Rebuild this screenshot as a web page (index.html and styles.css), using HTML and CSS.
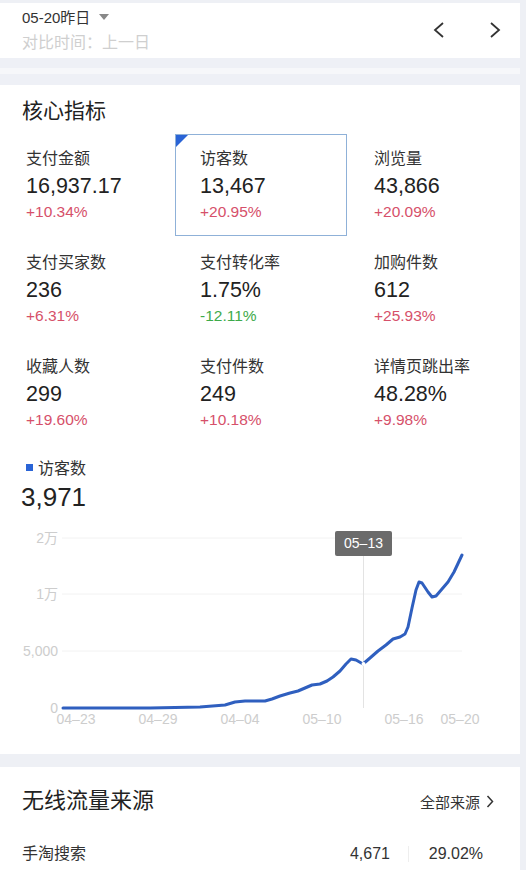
FILE: index.html
```html
<!DOCTYPE html>
<html>
  <head>
    <title>核心指标</title>
    <link rel="stylesheet" href="styles.css">
  </head>
  <body>
    <div class="page">
      <div class="header">
        <div class="date">
          <div class="date-main">05-20昨日 <span class="caret"></span></div>
          <div class="date-compare">对比时间：上一日</div>
        </div>
        <div class="nav">
          <svg width="12" height="16" viewBox="0 0 12 16"><polyline points="10,1 2,8 10,15" fill="none" stroke="#333" stroke-width="1.8"/></svg>
          <svg width="12" height="16" viewBox="0 0 12 16"><polyline points="2,1 10,8 2,15" fill="none" stroke="#333" stroke-width="1.8"/></svg>
        </div>
      </div>

      <div class="spacer"></div>

      <div class="panel core">
        <h2 class="panel-title">核心指标</h2>
        <div class="metrics">
          <div class="metric">
            <div class="metric-label">支付金额</div>
            <div class="metric-value">16,937.17</div>
            <div class="metric-change up">+10.34%</div>
          </div>
          <div class="metric active">
            <div class="metric-label">访客数</div>
            <div class="metric-value">13,467</div>
            <div class="metric-change up">+20.95%</div>
          </div>
          <div class="metric">
            <div class="metric-label">浏览量</div>
            <div class="metric-value">43,866</div>
            <div class="metric-change up">+20.09%</div>
          </div>
          <div class="metric">
            <div class="metric-label">支付买家数</div>
            <div class="metric-value">236</div>
            <div class="metric-change up">+6.31%</div>
          </div>
          <div class="metric">
            <div class="metric-label">支付转化率</div>
            <div class="metric-value">1.75%</div>
            <div class="metric-change down">-12.11%</div>
          </div>
          <div class="metric">
            <div class="metric-label">加购件数</div>
            <div class="metric-value">612</div>
            <div class="metric-change up">+25.93%</div>
          </div>
          <div class="metric">
            <div class="metric-label">收藏人数</div>
            <div class="metric-value">299</div>
            <div class="metric-change up">+19.60%</div>
          </div>
          <div class="metric">
            <div class="metric-label">支付件数</div>
            <div class="metric-value">249</div>
            <div class="metric-change up">+10.18%</div>
          </div>
          <div class="metric">
            <div class="metric-label">详情页跳出率</div>
            <div class="metric-value">48.28%</div>
            <div class="metric-change up">+9.98%</div>
          </div>
        </div>

        <div class="legend"><span class="legend-dot"></span>访客数</div>
        <div class="legend-value">3,971</div>

        <svg class="chart" width="520" height="220" viewBox="0 520 520 220">
          <g stroke="#f2f2f2" stroke-width="1">
            <line x1="62" y1="536" x2="462" y2="536"/>
            <line x1="62" y1="592" x2="462" y2="592"/>
            <line x1="62" y1="649" x2="462" y2="649"/>
          </g>
          <g class="axis-y" text-anchor="end">
            <text x="58" y="541">2万</text>
            <text x="58" y="597">1万</text>
            <text x="58" y="654">5,000</text>
            <text x="58" y="711">0</text>
          </g>
          <g class="axis-x" text-anchor="middle">
            <text x="76" y="722">04–23</text>
            <text x="158" y="722">04–29</text>
            <text x="240" y="722">04–04</text>
            <text x="322" y="722">05–10</text>
            <text x="404" y="722">05–16</text>
            <text x="460" y="722">05–20</text>
          </g>
          <line x1="363.5" y1="553" x2="363.5" y2="706" stroke="#e3e3e3" stroke-width="1"/>
          <polyline fill="none" stroke="#2f5fbf" stroke-width="3" stroke-linejoin="round" stroke-linecap="round"
            points="63,706 150,706 200,705 225,703 235,700 245,699 265,699 272,697 280,694 290,691 298,689 305,686 312,683 320,682 327,679 333,675 340,669 346,662 351,657 356,658 363,662 370,656 378,649 386,643 393,637 400,635 405,632 408,625 412,606 416,588 419,580 422,581 428,590 432,595 436,594 442,587 448,580 454,570 462,553"/>
          <circle cx="363.5" cy="662" r="2" fill="#fff"/>
          <rect x="335" y="529" width="57" height="25" rx="2" fill="#6b6b6b"/>
          <text class="tip" x="363.5" y="546" text-anchor="middle">05–13</text>
        </svg>
      </div>

      <div class="panel sources">
        <div class="sources-head">
          <h2 class="panel-title">无线流量来源</h2>
          <div class="more">全部来源
            <svg width="8" height="13" viewBox="0 0 8 13"><polyline points="1.5,1 6.5,6.5 1.5,12" fill="none" stroke="#333" stroke-width="1.5"/></svg>
          </div>
        </div>
        <div class="source-row">
          <span class="source-name">手淘搜索</span>
          <span class="source-num">4,671</span>
          <span class="source-sep"></span>
          <span class="source-pct">29.02%</span>
        </div>
      </div>
    </div>
  </body>
</html>
```

FILE: styles.css
```css
body {
  margin: 0;
  background-color: #eef0f5;
  font-family: "Liberation Sans", "Noto Sans CJK SC", sans-serif;
  color: #222;
}

.page {
  width: 520px;
  padding-top: 3px;
}

.header {
  height: 55px;
  box-sizing: border-box;
  background-color: #fff;
  padding: 5px 19px 0 22px;
  display: flex;
  justify-content: space-between;
}

.date-main {
  font-size: 15px;
  line-height: 20px;
  color: #333;
}

.caret {
  display: inline-block;
  margin-left: 4px;
  vertical-align: 3px;
  border-left: 5px solid transparent;
  border-right: 5px solid transparent;
  border-top: 6px solid #888;
}

.date-compare {
  margin-top: 5px;
  font-size: 16px;
  line-height: 20px;
  color: #cfcfcf;
}

.nav {
  display: flex;
  align-items: center;
  gap: 44px;
  padding-bottom: 6px;
}

.spacer {
  height: 27px;
  background: linear-gradient(#eef0f6 0, #eef0f6 10px, #f6f7fa 10px, #f6f7fa 16px, #eef0f6 16px);
}

.panel {
  background-color: #fff;
}

.panel-title {
  margin: 0;
  font-weight: normal;
  font-size: 21px;
  line-height: 24px;
  color: #222;
}

.core {
  padding: 14px 0 12px 0;
}

.core > .panel-title {
  padding-left: 22px;
}

.metrics {
  margin-top: 11px;
  padding-left: 1px;
  display: grid;
  grid-template-columns: 174px 174px 172px;
  row-gap: 2px;
}

.metric {
  position: relative;
  box-sizing: border-box;
  height: 102px;
  padding: 14px 0 0 24px;
  border: 1px solid transparent;
  width: 172px;
}

.metric.active {
  border-color: #8fb1d8;
}

.metric.active::before {
  content: "";
  position: absolute;
  left: 0;
  top: 0;
  border-top: 12px solid #2a64d6;
  border-right: 12px solid transparent;
}

.metric-label {
  font-size: 16px;
  line-height: 20px;
  color: #333;
}

.metric-value {
  margin-top: 4px;
  font-size: 21.5px;
  line-height: 26px;
  color: #222;
}

.metric-change {
  margin-top: 4px;
  font-size: 15.5px;
  line-height: 18px;
}

.up {
  color: #d6506a;
}

.down {
  color: #3daa4a;
}

.legend {
  margin-top: 15px;
  padding-left: 26px;
  font-size: 16px;
  line-height: 20px;
  color: #333;
}

.legend-dot {
  display: inline-block;
  width: 7px;
  height: 7px;
  background-color: #2a64d6;
  margin-right: 5px;
  vertical-align: 3px;
}

.legend-value {
  margin-top: 3px;
  padding-left: 21px;
  font-size: 26px;
  line-height: 30px;
  color: #222;
}

.chart {
  display: block;
  margin-top: 10px;
}

.axis-y text,
.axis-x text {
  font-family: "Liberation Sans", "Noto Sans CJK SC", sans-serif;
  font-size: 14px;
  fill: #cdcdcd;
}

.tip {
  font-family: "Liberation Sans", sans-serif;
  font-size: 14px;
  fill: #fff;
}

.sources {
  margin-top: 13px;
  padding: 22px 26px 20px 22px;
}

.sources-head {
  display: flex;
  justify-content: space-between;
  align-items: center;
}

.sources-head .panel-title {
  font-size: 22px;
}

.more {
  font-size: 15px;
  color: #333;
  display: flex;
  align-items: center;
  gap: 6px;
}

.source-row {
  margin-top: 31px;
  margin-right: 11px;
  display: flex;
  align-items: center;
  font-size: 16px;
  line-height: 20px;
  color: #333;
}

.source-name {
  flex: 1;
}

.source-sep {
  width: 1px;
  height: 16px;
  background-color: #eee;
  margin: 0 18px;
}

.source-pct {
  width: 56px;
  text-align: right;
}
```
